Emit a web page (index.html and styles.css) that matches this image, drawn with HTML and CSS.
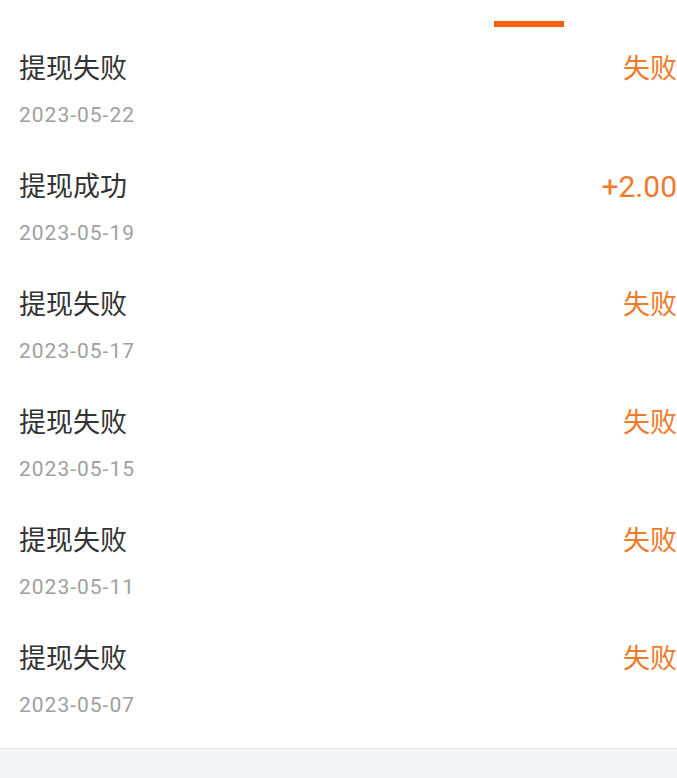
FILE: index.html
```html
<!DOCTYPE html>
<html lang="zh-CN">
<head>
    <meta charset="UTF-8">
    <meta name="viewport" content="width=device-width, initial-scale=1.0">
    <title>提现记录</title>
    <link rel="stylesheet" href="styles.css">
</head>
<body>
    <div class="tabs">
        <span class="tab-line"></span>
    </div>

    <ul class="record-list">
        <li class="record">
            <div class="record-info">
                <div class="record-title">提现失败</div>
                <div class="record-date">2023-05-22</div>
            </div>
            <div class="record-status">失败</div>
        </li>
        <li class="record">
            <div class="record-info">
                <div class="record-title">提现成功</div>
                <div class="record-date">2023-05-19</div>
            </div>
            <div class="record-status amount">+2.00</div>
        </li>
        <li class="record">
            <div class="record-info">
                <div class="record-title">提现失败</div>
                <div class="record-date">2023-05-17</div>
            </div>
            <div class="record-status">失败</div>
        </li>
        <li class="record">
            <div class="record-info">
                <div class="record-title">提现失败</div>
                <div class="record-date">2023-05-15</div>
            </div>
            <div class="record-status">失败</div>
        </li>
        <li class="record">
            <div class="record-info">
                <div class="record-title">提现失败</div>
                <div class="record-date">2023-05-11</div>
            </div>
            <div class="record-status">失败</div>
        </li>
        <li class="record">
            <div class="record-info">
                <div class="record-title">提现失败</div>
                <div class="record-date">2023-05-07</div>
            </div>
            <div class="record-status">失败</div>
        </li>
    </ul>

    <div class="footer-space"></div>
</body>
</html>
```

FILE: styles.css
```css
html, body {
    height: 100%;
}
body {
    margin: 0;
    font-family: Roboto, "Noto Sans CJK SC", sans-serif;
    background: #f4f5f7;
    overflow: hidden;
    display: flex;
    flex-direction: column;
}
.tabs {
    background: #fff;
    height: 29px;
    padding-left: 494px;
}
.tab-line {
    display: block;
    margin-top: 21px;
    width: 70px;
    height: 6px;
    background: #f0620f;
}
.record-list {
    list-style: none;
    margin: 0;
    padding: 0 0 11px;
    background: #fff;
    border-bottom: 1px solid #e4e4e6;
}
.record {
    display: flex;
    justify-content: space-between;
    align-items: flex-start;
    height: 118px;
    box-sizing: border-box;
    padding: 22px 0 0 19px;
}
.record-title {
    font-size: 27px;
    line-height: 36px;
    color: #333;
}
.record-date {
    margin-top: 14px;
    font-size: 21px;
    line-height: 28px;
    letter-spacing: 1px;
    color: #a0a0a0;
}
.record-status {
    font-size: 27px;
    line-height: 36px;
    color: #f07a2a;
    white-space: nowrap;
}
.amount {
    font-size: 30px;
}
.footer-space {
    flex: 1;
}
```
